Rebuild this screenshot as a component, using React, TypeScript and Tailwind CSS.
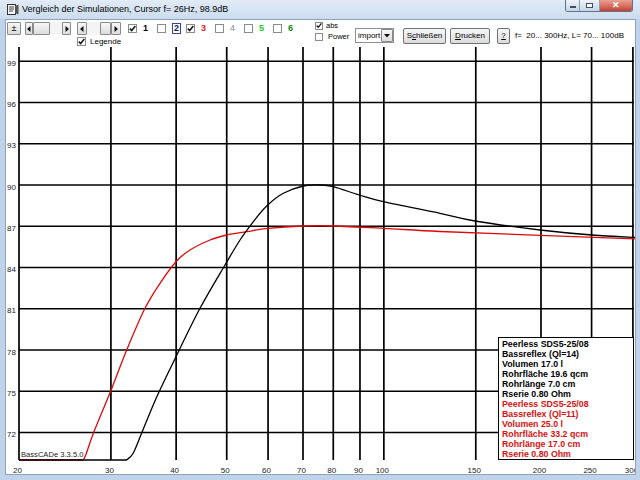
import React from "react";

type P = [number, number];

const fx = (f: number) => 19 + 226.7 * Math.log(f / 20);
const fy = (db: number) => 460 - (db - 70) * 13.75;

const xTicks = [20, 30, 40, 50, 60, 70, 80, 90, 100, 150, 200, 250, 300];
const yTicks = [72, 75, 78, 81, 84, 87, 90, 93, 96, 99];

// curve points, read off the plot in page pixels
const blackPts: P[] = [
  [126.5, 460], [133, 453.5], [141.7, 433], [156.7, 397], [176, 356.7], [200, 308.3],
  [225, 265], [240, 240], [253.3, 221.7], [266.7, 206], [283.3, 193.3], [303.3, 186],
  [320, 185], [333.3, 186.7], [359.3, 195], [383.3, 201.7], [440, 213.3], [475, 221],
  [540, 230], [592, 235], [636, 237.5],
];

const redPts: P[] = [
  [83, 460], [85.5, 455.5], [93.5, 433], [110.7, 391], [126.7, 350], [145, 308.3],
  [160, 283.3], [176, 261.7], [190, 250], [210, 240], [226.7, 235], [246.7, 231.7],
  [267.7, 228.3], [303.3, 226], [333.3, 226], [383.3, 228.3], [440, 231.5], [540, 235.3],
  [636, 239],
];

function smooth(pts: P[]) {
  let d = "";
  for (let i = 0; i < pts.length - 1; i++) {
    const p0 = pts[i - 1] || pts[i];
    const p1 = pts[i];
    const p2 = pts[i + 1];
    const p3 = pts[i + 2] || p2;
    const c1x = p1[0] + (p2[0] - p0[0]) / 6;
    const c1y = p1[1] + (p2[1] - p0[1]) / 6;
    const c2x = p2[0] - (p3[0] - p1[0]) / 6;
    const c2y = p2[1] - (p3[1] - p1[1]) / 6;
    d += ` C${c1x.toFixed(1)} ${c1y.toFixed(1)} ${c2x.toFixed(1)} ${c2y.toFixed(1)} ${p2[0]} ${p2[1]}`;
  }
  return d;
}

const legend = [
  { text: "Peerless SDS5-25/08", red: false },
  { text: "Bassreflex (Ql=14)", red: false },
  { text: "Volumen 17.0 l", red: false },
  { text: "Rohrfläche 19.6 qcm", red: false },
  { text: "Rohrlänge 7.0 cm", red: false },
  { text: "Rserie 0.80 Ohm", red: false },
  { text: "Peerless SDS5-25/08", red: true },
  { text: "Bassreflex (Ql=11)", red: true },
  { text: "Volumen 25.0 l", red: true },
  { text: "Rohrfläche 33.2 qcm", red: true },
  { text: "Rohrlänge 17.0 cm", red: true },
  { text: "Rserie 0.80 Ohm", red: true },
];

function Check({ checked, small }: { checked?: boolean; small?: boolean }) {
  return (
    <span
      className={`${small ? "w-[8px] h-[8px]" : "w-[9px] h-[9px]"} shrink-0 border border-[#8b8b8b] bg-white flex items-center justify-center`}
    >
      {checked && (
        <svg width="7" height="7" viewBox="0 0 7 7">
          <path d="M0.8 3.6 L2.7 5.6 L6.3 1" fill="none" stroke="#1a1a1a" strokeWidth="1.6" />
        </svg>
      )}
    </span>
  );
}

function Arrow({ dir }: { dir: "l" | "r" }) {
  return (
    <svg width="4" height="6" viewBox="0 0 4 6">
      <path d={dir === "l" ? "M3.5 0 L0 3 L3.5 6 Z" : "M0.5 0 L4 3 L0.5 6 Z"} fill="#111" />
    </svg>
  );
}

const btn =
  "flex items-center justify-center border border-[#8a8a8a] rounded-[1px] bg-gradient-to-b from-[#f7f7f7] to-[#dcdcdc]";

function Toolbar() {
  const boxes = [
    { n: "1", on: true, cls: "text-black font-bold" },
    { n: "2", on: false, cls: "text-[#14145a] font-bold border border-[#2d4aa0] px-[1px] -ml-[2px]" },
    { n: "3", on: true, cls: "text-[#e01818] font-bold" },
    { n: "4", on: false, cls: "text-[#8c8c8c]" },
    { n: "5", on: false, cls: "text-[#22cc22] font-bold" },
    { n: "6", on: false, cls: "text-[#158a15] font-bold" },
  ];
  return (
    <div className="h-[27px] flex text-[8px] leading-none text-black">
      <div className="flex flex-col pl-[1px] pt-[2px]">
        <div className="flex items-center h-[13px]">
          <div className={`${btn} w-[14px] h-[13px] text-[9px]`}>±</div>
          {/* first slider */}
          <div className="ml-[4px] w-[46px] h-[13px] flex bg-[#f4f4f4]">
            <div className={`${btn} w-[8px] h-[13px]`}>
              <Arrow dir="l" />
            </div>
            <div className={`${btn} w-[17px] h-[13px]`} />
            <div className="w-[12px]" />
            <div className={`${btn} w-[9px] h-[13px]`}>
              <Arrow dir="r" />
            </div>
          </div>
          {/* second slider */}
          <div className="ml-[6px] w-[44px] h-[13px] flex bg-[#f4f4f4]">
            <div className={`${btn} w-[10px] h-[13px]`}>
              <Arrow dir="l" />
            </div>
            <div className="w-[13px]" />
            <div className={`${btn} w-[11px] h-[13px]`} />
            <div className={`${btn} w-[10px] h-[13px]`}>
              <Arrow dir="r" />
            </div>
          </div>
          <div className="ml-[7px] flex">
            {boxes.map((b) => (
              <div key={b.n} className="w-[29px] flex items-center">
                <Check checked={b.on} />
                <span className={`ml-[6px] text-[9px] ${b.cls}`}>{b.n}</span>
              </div>
            ))}
          </div>
        </div>
        <div className="flex items-center ml-[70px] mt-[2px]">
          <Check checked />
          <span className="ml-[4px]">Legende</span>
        </div>
      </div>

      <div className="ml-[13px] w-[40px] flex flex-col pt-[1px] text-[7.5px]">
        <div className="flex items-center h-[9px]">
          <Check checked small />
          <span className="ml-[3px]">abs</span>
        </div>
        <div className="flex items-center h-[9px] mt-[2px]">
          <Check small />
          <span className="ml-[5px]">Power</span>
        </div>
      </div>

      <div className="mt-[8px] w-[39px] h-[15px] border border-[#8f8f8f] bg-white flex items-center">
        <span className="pl-[2px] flex-1">import</span>
        <div className={`${btn} w-[12px] h-[13px] mr-[0px]`}>
          <svg width="6" height="4" viewBox="0 0 6 4">
            <path d="M0 0 L6 0 L3 3.5 Z" fill="#111" />
          </svg>
        </div>
      </div>

      <div className={`${btn} ml-[9px] mt-[8px] w-[43px] h-[16px] rounded-[2px] border-[#707070]`}>
        S<span className="underline">c</span>hließen
      </div>
      <div className={`${btn} ml-[4px] mt-[8px] w-[40px] h-[16px] rounded-[2px] border-[#707070]`}>
        <span className="underline">D</span>rucken
      </div>
      <div className={`${btn} ml-[7px] mt-[8px] w-[13px] h-[16px] rounded-[2px] border-[#707070]`}>
        <span className="underline">?</span>
      </div>
      <div className="ml-[5px] mt-[12px] whitespace-pre">f=  20... 300Hz, L= 70... 100dB</div>
    </div>
  );
}

function Chart() {
  const blackD = `M19 460 L126.5 460${smooth(blackPts)}`;
  const redD = `M19 460 L83 460${smooth(redPts)}`;
  return (
    <svg width="629" height="427" viewBox="6 47 629 427" className="block">
      {xTicks.map((f) => (
        <line key={f} x1={fx(f)} y1={47} x2={fx(f)} y2={460} stroke="#000" strokeWidth="1.7" />
      ))}
      {yTicks.map((d) => (
        <line key={d} x1={19} y1={fy(d)} x2={634} y2={fy(d)} stroke="#000" strokeWidth="1.6" />
      ))}
      {yTicks.map((d) => (
        <text key={d} x={16} y={fy(d) + 4.5} fontSize="8" textAnchor="end" fill="#222">
          {d}
        </text>
      ))}
      {xTicks.map((f) => (
        <text key={f} x={fx(f) - 1.5} y={472.5} fontSize="8" textAnchor="middle" fill="#222">
          {f}
        </text>
      ))}
      <path d={redD} fill="none" stroke="#dc0a0a" strokeWidth="1.3" />
      <path d={blackD} fill="none" stroke="#000" strokeWidth="1.3" />
      <text x={21} y={457} fontSize="7.6" fill="#222">
        BassCADe 3.3.5.0
      </text>
    </svg>
  );
}

export default function App() {
  return (
    <div className="w-[640px] h-[480px] overflow-hidden bg-[#bfd3ea] flex flex-col font-['Liberation_Sans',Arial,sans-serif]">
      <div className="h-[19px] shrink-0 flex bg-gradient-to-b from-[#e2ebf6] to-[#cbdcee]">
        <svg width="12" height="11" viewBox="0 0 12 11" className="ml-[7px] mt-[4px]">
          <rect x="0.5" y="0.5" width="8" height="10" fill="#f4f4f4" stroke="#333" />
          <path d="M2 3 H7 M2 5 H7 M2 7 H6" stroke="#444" strokeWidth="1" />
          <path d="M8 2 L11.5 0.5 V10.5 L8 9 Z" fill="#555" />
        </svg>
        <span className="ml-[3px] self-center text-[9px] leading-none text-black">
          Vergleich der Simulationen, Cursor f= 26Hz, 98.9dB
        </span>
        <div className="ml-auto mr-[7px] flex h-[12px] border border-t-0 border-[#5e7190] rounded-b-[3px] overflow-hidden">
          <div className="w-[14px] bg-gradient-to-b from-[#eef3f9] to-[#c6d5e7] border-r border-[#8ea0b8] flex items-end justify-center pb-[3px]">
            <div className="w-[6px] h-[2px] bg-white border-[0.5px] border-[#3d4d63]" />
          </div>
          <div className="w-[20px] bg-gradient-to-b from-[#eef3f9] to-[#c6d5e7] border-r border-[#8ea0b8] flex items-center justify-center">
            <div className="w-[7px] h-[5px] bg-white border border-[#3d4d63]" />
          </div>
          <div className="w-[32px] bg-gradient-to-b from-[#e9a093] to-[#c3412f] flex items-center justify-center text-white text-[9px] font-bold leading-none">
            ✕
          </div>
        </div>
      </div>
      <div className="ml-[5px] w-[631px] h-[456px] border border-[#8da2bc] bg-white flex flex-col relative">
        <Toolbar />
        <Chart />
        <div className="absolute left-[492px] top-[317px] w-[136px] border-[1.5px] border-black bg-white pl-[3px] text-[8.8px] font-bold leading-[10px] pt-[0.5px]">
          {legend.map((l, i) => (
            <div key={i} className={`whitespace-nowrap ${l.red ? "text-[#d81010]" : "text-black"}`}>
              {l.text}
            </div>
          ))}
        </div>
      </div>
    </div>
  );
}
